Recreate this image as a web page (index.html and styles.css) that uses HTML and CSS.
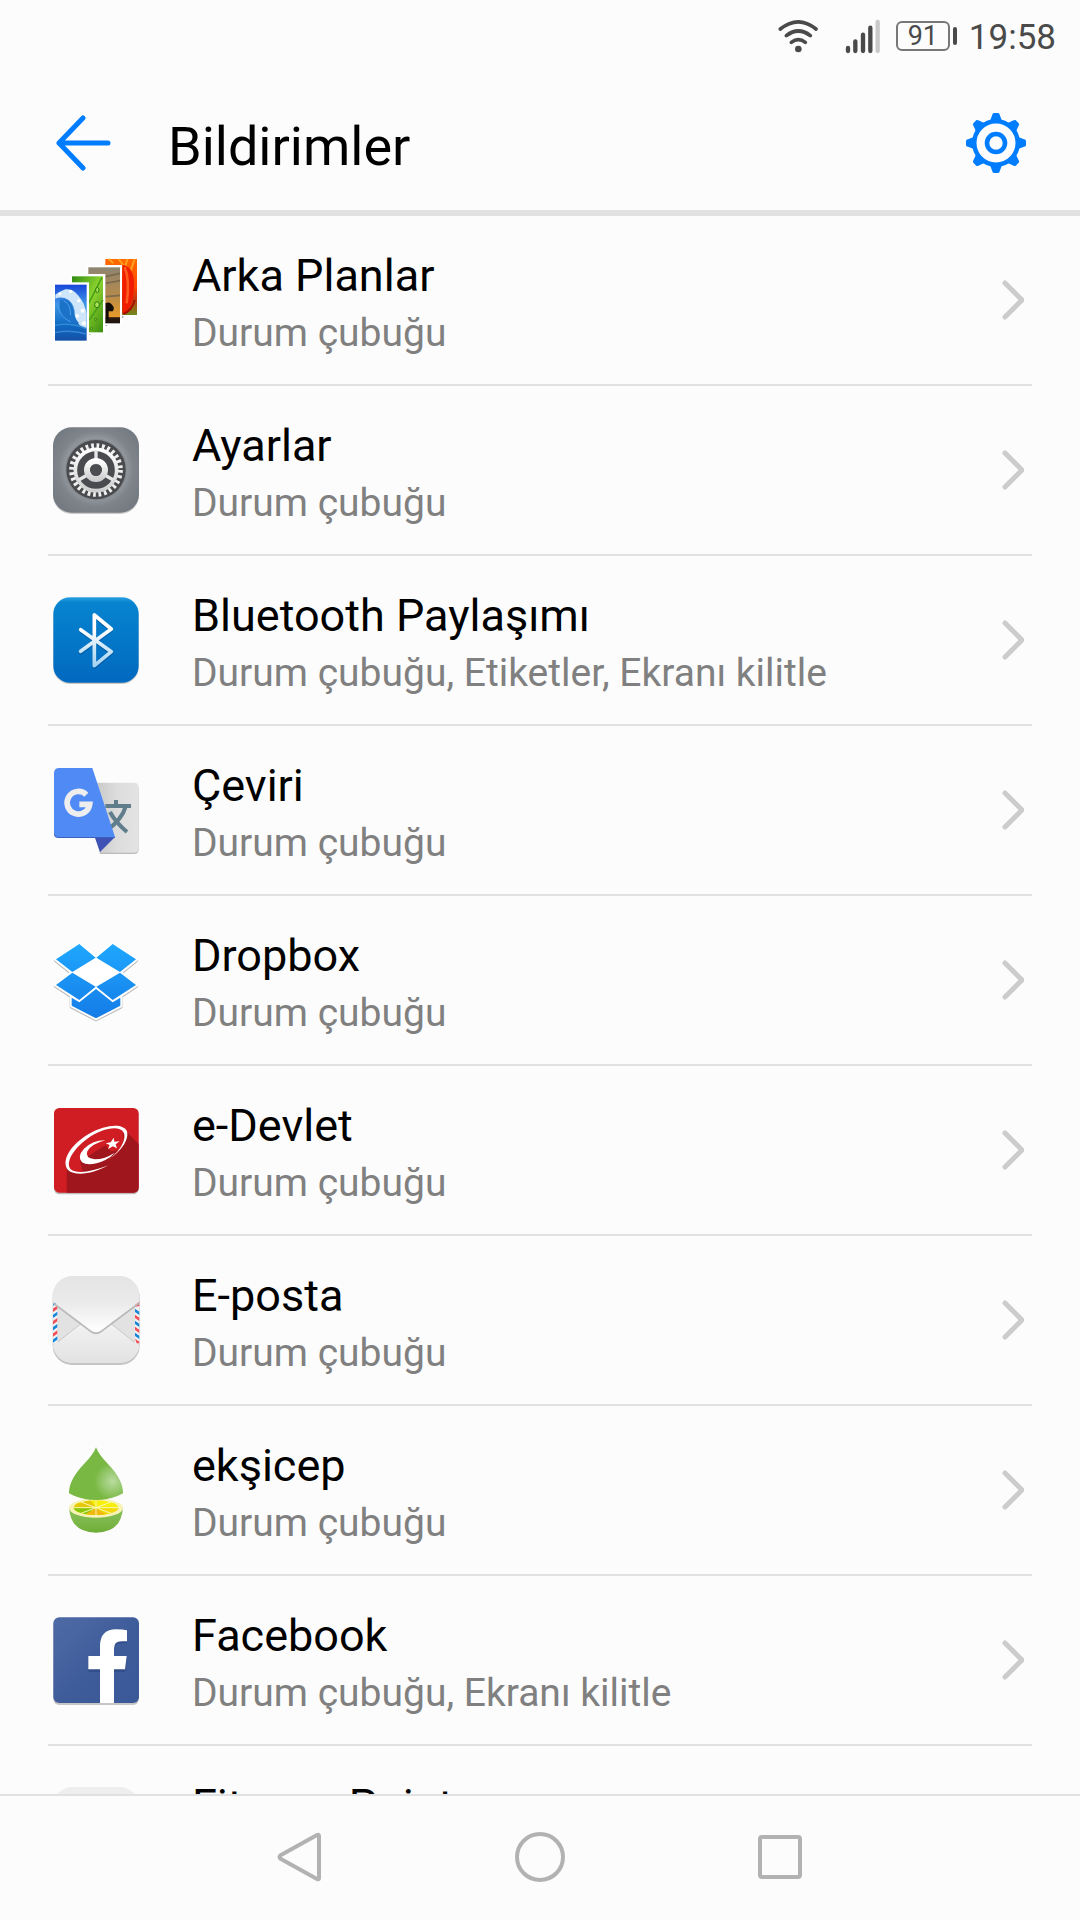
FILE: index.html
```html
<!DOCTYPE html>
<html lang="tr">
<head>
    <meta charset="UTF-8">
    <meta name="viewport" content="width=device-width, initial-scale=1.0">
    <title>Bildirimler</title>
    <link rel="stylesheet" href="styles.css">
</head>
<body>

<!-- Durum çubuğu -->
<div class="status-bar">
    <svg class="wifi" viewBox="51 51 126 108" aria-hidden="true">
        <g fill="none" stroke="#4a4a4a" stroke-width="11" stroke-linecap="round">
            <path d="M61 84Q115 41 168 84"/>
            <path d="M79 104Q115 76 151 104"/>
            <path d="M94 124Q115 108 136 124"/>
        </g>
        <circle cx="115" cy="144" r="10" fill="#4a4a4a"/>
    </svg>
    <svg class="signal" viewBox="255 51 108 108" aria-hidden="true">
        <g stroke="#4a4a4a" stroke-width="13" stroke-linecap="round">
            <path d="M264 141V150M286 121V150M309 101V150M331 80V150"/>
            <path d="M353 63V150" stroke="#c9c9c9"/>
        </g>
    </svg>
    <div class="battery">
        <span class="battery-level">91</span>
        <span class="battery-tip"></span>
    </div>
    <span class="clock">19:58</span>
</div>

<header>
    <button class="icon-button" aria-label="Geri">
        <svg class="back" viewBox="0 0 56 56">
            <path d="M28 3L4 28L28 53M4 28H53" fill="none" stroke="#007dff" stroke-width="5" stroke-linecap="round" stroke-linejoin="round"/>
        </svg>
    </button>
    <h1>Bildirimler</h1>
    <button class="icon-button" aria-label="Ayarlar">
        <svg class="gear" viewBox="-30 -30 60 60">
            <defs>
                <path id="tooth" d="M-6 -22L-3.8 -28Q-3.5 -30 -2 -30H2Q3.5 -30 3.8 -28L6 -22Z"/>
            </defs>
            <g fill="#007dff">
                <use href="#tooth"/>
                <use href="#tooth" transform="rotate(45)"/>
                <use href="#tooth" transform="rotate(90)"/>
                <use href="#tooth" transform="rotate(135)"/>
                <use href="#tooth" transform="rotate(180)"/>
                <use href="#tooth" transform="rotate(225)"/>
                <use href="#tooth" transform="rotate(270)"/>
                <use href="#tooth" transform="rotate(315)"/>
            </g>
            <circle r="21.7" fill="none" stroke="#007dff" stroke-width="4.4"/>
            <circle r="9" fill="none" stroke="#007dff" stroke-width="4.6"/>
        </svg>
    </button>
</header>

<!-- Uygulama listesi -->
<main>
    <ul class="app-list">
        <li>
            <a href="#">
                <svg class="app-icon" viewBox="24 36 288 288" aria-hidden="true">
                    <defs>
                        <linearGradient id="wave" x1="0" y1="0" x2="0" y2="1">
                            <stop offset="0" stop-color="#1746d8"/><stop offset=".35" stop-color="#3f97e8"/><stop offset=".7" stop-color="#0f6cc4"/><stop offset="1" stop-color="#1550a8"/>
                        </linearGradient>
                        <linearGradient id="leaf" x1="0" y1="0" x2="1" y2="1">
                            <stop offset="0" stop-color="#2f8a12"/><stop offset=".5" stop-color="#8ed42f"/><stop offset="1" stop-color="#3c8c10"/>
                        </linearGradient>
                        <linearGradient id="dusk" x1="0" y1="0" x2="0" y2="1">
                            <stop offset="0" stop-color="#8d8471"/><stop offset=".5" stop-color="#b58a4c"/><stop offset=".88" stop-color="#e79a2a"/><stop offset=".9" stop-color="#2a1a10"/><stop offset="1" stop-color="#1c1310"/>
                        </linearGradient>
                        <linearGradient id="tulip" x1="0" y1="0" x2="0" y2="1">
                            <stop offset="0" stop-color="#ff6a00"/><stop offset=".5" stop-color="#ff4a00"/><stop offset=".7" stop-color="#c83a10"/><stop offset="1" stop-color="#6f8a1c"/>
                        </linearGradient>
                    </defs>
                    <path d="M244 228h6v6h-6zM196 252h6v6h-6zM146 278h6v6h-6z" fill="#aaa"/>
                    <rect x="196" y="57" width="95" height="168" fill="url(#tulip)"/>
                    <path d="M206 57L220 70M236 57L250 76M262 57L256 78M284 57L272 92" stroke="#ffa01e" stroke-width="6"/>
                    <path d="M247 74Q285 80 282 140Q280 210 247 222Z" fill="#f01e00"/>
                    <path d="M254 82Q270 120 260 190" fill="none" stroke="#ff5a1e" stroke-width="8"/>
                    <path d="M284 180Q276 212 250 222" fill="none" stroke="#a80e00" stroke-width="6"/>
                    <rect x="140" y="75" width="106" height="180" fill="#fff"/>
                    <rect x="145" y="82" width="95" height="168" fill="url(#dusk)"/>
                    <path d="M196 110L240 100M196 130L240 122M196 170L240 166" stroke="#7d6b4e" stroke-width="5"/>
                    <path d="M196 190Q208 184 216 194Q226 204 218 214H206V238H196Z" fill="#120c08"/>
                    <rect x="90" y="102" width="106" height="180" fill="#fff"/>
                    <rect x="96" y="109" width="93" height="168" fill="url(#leaf)"/>
                    <path d="M146 190L186 112M148 240L189 180" stroke="#4ba01a" stroke-width="5"/>
                    <g fill="#a9e457" stroke="#2c7a0c" stroke-width="3">
                        <ellipse cx="172" cy="150" rx="5" ry="8"/><ellipse cx="171" cy="194" rx="7" ry="9"/><circle cx="167" cy="238" r="3"/><circle cx="154" cy="266" r="3"/>
                    </g>
                    <rect x="39" y="127" width="108" height="181" fill="#fff"/>
                    <rect x="45" y="134" width="95" height="168" fill="url(#wave)"/>
                    <path d="M46 164Q60 154 76 148Q98 144 114 166Q134 188 140 222V268Q108 256 104 226Q106 196 86 180Q66 168 46 176Z" fill="#cfe6fa"/>
                    <path d="M60 180Q96 172 100 212Q104 238 118 250Q76 250 66 224Q56 204 60 180Z" fill="#1c72c8"/>
                    <path d="M70 182Q92 190 92 226M52 196Q62 232 92 246" fill="none" stroke="#4a9fe4" stroke-width="3"/>
                    <path d="M45 256Q90 246 140 266M45 278Q90 268 140 282" fill="none" stroke="#3588d6" stroke-width="4"/>
                    <g fill="#fff"><circle cx="92" cy="154" r="5"/><circle cx="116" cy="182" r="5"/><circle cx="128" cy="212" r="6"/><circle cx="112" cy="228" r="5"/><circle cx="132" cy="250" r="6"/><circle cx="60" cy="162" r="4"/></g>
                </svg>
                <div class="app-text">
                    <h2>Arka Planlar</h2>
                    <p>Durum çubuğu</p>
                </div>
                <svg class="chevron" viewBox="0 0 24 40" aria-hidden="true"><path d="M5 3L22 20L5 37"/></svg>
            </a>
        </li>
        <li>
            <a href="#">
                <svg class="app-icon" viewBox="24 36 288 288" aria-hidden="true">
                    <defs>
                        <radialGradient id="plate" gradientUnits="userSpaceOnUse" cx="168" cy="176" r="150">
                            <stop offset=".55" stop-color="#9a9fa4"/><stop offset=".75" stop-color="#7e848a"/><stop offset="1" stop-color="#757b82"/>
                        </radialGradient>
                        <linearGradient id="steel" x1="0" y1="0" x2="0" y2="1">
                            <stop offset="0" stop-color="#fff"/><stop offset="1" stop-color="#cfcfcf"/>
                        </linearGradient>
                    </defs>
                    <rect x="39" y="56" width="258" height="256" rx="56" fill="#000" opacity=".2"/>
                    <rect x="39" y="52" width="258" height="256" rx="56" fill="url(#plate)"/>
                    <circle cx="168" cy="179" r="93" fill="#868b90"/>
                    <circle cx="168" cy="179" r="89" fill="#494b4e"/>
                    <circle cx="168" cy="180" r="73" fill="none" stroke="#f0f0f0" stroke-width="15" pathLength="56" stroke-dasharray="1 1"/>
                    <circle cx="168" cy="180" r="62" fill="none" stroke="url(#steel)" stroke-width="11"/>
                    <path d="M168 180V120M168 180L116 210M168 180L220 210" stroke="#e6e6e6" stroke-width="10"/>
                    <circle cx="168" cy="180" r="27" fill="none" stroke="url(#steel)" stroke-width="18"/>
                    <circle cx="168" cy="180" r="18" fill="#4b4d50"/>
                </svg>
                <div class="app-text">
                    <h2>Ayarlar</h2>
                    <p>Durum çubuğu</p>
                </div>
                <svg class="chevron" viewBox="0 0 24 40" aria-hidden="true"><path d="M5 3L22 20L5 37"/></svg>
            </a>
        </li>
        <li>
            <a href="#">
                <svg class="app-icon" viewBox="24 36 288 288" aria-hidden="true">
                    <defs>
                        <linearGradient id="bt" x1="0" y1="0" x2="0" y2="1">
                            <stop offset="0" stop-color="#2aa2e0"/><stop offset=".06" stop-color="#0684cf"/><stop offset="1" stop-color="#0169c0"/>
                        </linearGradient>
                        <linearGradient id="rune" gradientUnits="userSpaceOnUse" x1="0" y1="100" x2="0" y2="262">
                            <stop offset=".3" stop-color="#fff"/><stop offset="1" stop-color="#9fd0f0"/>
                        </linearGradient>
                    </defs>
                    <rect x="40" y="56" width="256" height="256" rx="50" fill="#000" opacity=".2"/>
                    <rect x="40" y="52" width="256" height="256" rx="50" fill="url(#bt)"/>
                    <g fill="none" stroke-width="11" stroke-linecap="round" stroke-linejoin="round">
                        <path d="M122 218L214 151L163 109V261L214 219L122 153" stroke="#00448a" opacity=".5"/>
                        <path d="M122 214L214 147L163 105V257L214 215L122 149" stroke="url(#rune)"/>
                    </g>
                </svg>
                <div class="app-text">
                    <h2>Bluetooth Paylaşımı</h2>
                    <p>Durum çubuğu, Etiketler, Ekranı kilitle</p>
                </div>
                <svg class="chevron" viewBox="0 0 24 40" aria-hidden="true"><path d="M5 3L22 20L5 37"/></svg>
            </a>
        </li>
        <li>
            <a href="#">
                <svg class="app-icon" viewBox="24 546 288 288" aria-hidden="true">
                    <defs>
                        <linearGradient id="fold" x1="0" y1="0" x2="1" y2="0">
                            <stop offset="0" stop-color="#bdbdbd"/><stop offset=".6" stop-color="#dcdcdc"/><stop offset="1" stop-color="#e4e4e4"/>
                        </linearGradient>
                    </defs>
                    <path d="M130 613H282Q296 613 296 627V808Q296 822 282 822H180Z" fill="#bbb"/>
                    <path d="M130 608H282Q296 608 296 622V804Q296 818 282 818H180Z" fill="url(#fold)"/>
                    <path d="M196 678H273M228 660V680M257 680Q246 718 200 752M210 696Q226 726 261 756" fill="none" stroke="#607d8b" stroke-width="12"/>
                    <path d="M164 771H225L180 816Z" fill="#3f51b5"/>
                    <path d="M42 600V762Q42 774 56 774H225L222 768Z" fill="#3a62b8"/>
                    <path d="M58 564H157L225 771H56Q42 771 42 757V580Q42 564 58 564Z" fill="#4f8af5"/>
                    <path d="M139 644A34 34 0 1 0 149 673H118" fill="none" stroke="#eee" stroke-width="17"/>
                </svg>
                <div class="app-text">
                    <h2>Çeviri</h2>
                    <p>Durum çubuğu</p>
                </div>
                <svg class="chevron" viewBox="0 0 24 40" aria-hidden="true"><path d="M5 3L22 20L5 37"/></svg>
            </a>
        </li>
        <li>
            <a href="#">
                <svg class="app-icon" viewBox="24 36 288 288" aria-hidden="true">
                    <defs>
                        <linearGradient id="box" gradientUnits="userSpaceOnUse" x1="0" y1="72" x2="0" y2="295">
                            <stop offset="0" stop-color="#1fa8ff"/><stop offset="1" stop-color="#147be6"/>
                        </linearGradient>
                    </defs>
                    <path d="M118 72L168 113L218 72L288 118L240 157L288 195L242 226V257L168 295L95 257V226L48 195L97 157L48 118Z" transform="translate(0 3)" fill="#bbb" stroke="#bbb" stroke-width="12" stroke-linejoin="round"/>
                    <path d="M118 72L168 113L218 72L288 118L240 157L288 195L242 226V257L168 295L95 257V226L48 195L97 157L48 118Z" fill="#fff" stroke="#fff" stroke-width="11" stroke-linejoin="round"/>
                    <g fill="url(#box)">
                        <path d="M118 72L167 113L97 156L48 118Z"/>
                        <path d="M218 72L288 118L240 156L169 113Z"/>
                        <path d="M97 158L167 200L118 240L48 195Z"/>
                        <path d="M240 158L288 195L218 240L169 200Z"/>
                        <path d="M95 233L118 247L168 207L218 247L241 233V257L168 295L95 257Z"/>
                    </g>
                </svg>
                <div class="app-text">
                    <h2>Dropbox</h2>
                    <p>Durum çubuğu</p>
                </div>
                <svg class="chevron" viewBox="0 0 24 40" aria-hidden="true"><path d="M5 3L22 20L5 37"/></svg>
            </a>
        </li>
        <li>
            <a href="#">
                <svg class="app-icon" viewBox="24 546 288 288" aria-hidden="true">
                    <rect x="42" y="569" width="254" height="254" rx="16" fill="#bbb"/>
                    <rect x="42" y="564" width="254" height="254" rx="16" fill="#d01c23"/>
                    <path d="M258 634L296 672V802Q296 818 280 818H80V738L120 700L240 650Z" fill="#9f161c"/>
                    <path d="M82 738Q82 700 130 660Q190 616 240 630Q262 650 240 690Q200 740 120 756Q90 758 82 738Z" fill="#d01c23"/>
                    <path d="M120 724L128 755Q180 746 214 716L240 690L212 694L196 676Z" fill="#9f161c"/>
                    <path fill="#fff" fill-rule="evenodd" d="M204 736C160 762 106 770 84 750C62 722 92 674 146 642C200 612 250 610 261 634C268 664 236 700 204 719C240 696 262 656 250 636C236 614 184 626 142 656C98 688 76 728 92 748C112 764 160 754 204 736Z"/>
                    <path d="M196 661Q160 660 132 686Q110 710 126 727Q148 742 196 720Q215 710 224 698Q194 718 164 718Q134 714 142 694Q154 672 196 661Z" fill="#fff"/>
                    <path d="M221 653L223 665L239 664L227 673L231 685L218 679L204 688L209 675L197 670L212 667Z" fill="#fff"/>
                </svg>
                <div class="app-text">
                    <h2>e-Devlet</h2>
                    <p>Durum çubuğu</p>
                </div>
                <svg class="chevron" viewBox="0 0 24 40" aria-hidden="true"><path d="M5 3L22 20L5 37"/></svg>
            </a>
        </li>
        <li>
            <a href="#">
                <svg class="app-icon" viewBox="24 36 288 288" aria-hidden="true">
                    <defs>
                        <linearGradient id="flap" x1="0" y1="0" x2="0" y2="1">
                            <stop offset="0" stop-color="#e4e4e4"/><stop offset=".5" stop-color="#ebebeb"/><stop offset="1" stop-color="#fff"/>
                        </linearGradient>
                        <linearGradient id="paper" gradientUnits="userSpaceOnUse" x1="0" y1="180" x2="0" y2="308">
                            <stop offset="0" stop-color="#f4f4f4"/><stop offset="1" stop-color="#e2e2e2"/>
                        </linearGradient>
                        <clipPath id="envelope"><rect x="39" y="49" width="259" height="260" rx="58"/></clipPath>
                    </defs>
                    <rect x="38" y="54" width="261" height="261" rx="58" fill="#c4c4c4"/>
                    <g clip-path="url(#envelope)">
                        <rect x="38" y="48" width="261" height="261" fill="#e2e2e2"/>
                        <path d="M38 258L124 190H212L299 258V309H38Z" fill="url(#paper)"/>
                        <path d="M52 247L124 190M212 190L284 247" stroke="#c6c6c6" stroke-width="3"/>
                        <path d="M38 126H52V250H38ZM285 126H299V250H285Z" fill="#f2f2f2"/>
                        <path d="M38 131L50 126V132L38 138ZM38 165L52 155V165L38 175ZM38 202L52 192V202L38 212ZM38 239L52 229V239L38 249ZM285 146L299 156V166L285 156ZM285 182L299 192V202L285 192ZM285 218L299 228V238L285 228Z" fill="#1787dc"/>
                        <path d="M38 146L52 137V147L38 157ZM38 184L52 174V184L38 194ZM38 221L52 211V221L38 231ZM285 134L299 124V138L285 140ZM285 164L299 174V184L285 174ZM285 200L299 210V220L285 210ZM285 236L299 246V250H290Z" fill="#f04f58"/>
                        <path d="M38 128L152 214Q168 226 184 214L299 128" fill="none" stroke="#b9b9b9" stroke-width="5"/>
                        <path d="M38 48H299V124L182 211Q168 221 154 211L38 124Z" fill="url(#flap)"/>
                    </g>
                </svg>
                <div class="app-text">
                    <h2>E-posta</h2>
                    <p>Durum çubuğu</p>
                </div>
                <svg class="chevron" viewBox="0 0 24 40" aria-hidden="true"><path d="M5 3L22 20L5 37"/></svg>
            </a>
        </li>
        <li>
            <a href="#">
                <svg class="app-icon" viewBox="24 546 288 288" aria-hidden="true">
                    <defs>
                        <radialGradient id="lime" gradientUnits="userSpaceOnUse" cx="218" cy="664" r="56">
                            <stop offset="0" stop-color="#b9dca0"/><stop offset="1" stop-color="#79b843"/>
                        </radialGradient>
                        <linearGradient id="rind" x1="0" y1="0" x2="0" y2="1">
                            <stop offset="0" stop-color="#8cc25e"/><stop offset="1" stop-color="#6fae3a"/>
                        </linearGradient>
                        <clipPath id="pulp"><ellipse cx="168" cy="743" rx="67" ry="22"/></clipPath>
                    </defs>
                    <path d="M168 562Q176 584 204 612Q250 660 249 700Q216 720 168 720Q120 720 87 700Q86 660 132 612Q160 584 168 562Z" fill="url(#lime)"/>
                    <path d="M87 743Q92 817 168 818Q244 817 249 743Z" fill="url(#rind)"/>
                    <ellipse cx="168" cy="744" rx="81" ry="29" fill="#f6f3b4"/>
                    <g clip-path="url(#pulp)">
                        <rect x="98" y="718" width="140" height="50" fill="#f7ee0a"/>
                        <path d="M168 743L98 743V718H150Z" fill="#e6c80a"/>
                        <path d="M168 743L98 743V760L130 770Z" fill="#8cc608"/>
                        <path d="M168 743L125 770H210Z" fill="#efb90d"/>
                        <path d="M168 743L210 770L238 745Z" fill="#f4d80a"/>
                        <path d="M98 743H238M168 716V770M112 722L224 764M112 764L224 722" stroke="#f9f7b0" stroke-width="3"/>
                    </g>
                    <path d="M130 716Q168 724 206 716Q168 706 130 716Z" fill="#79b843"/>
                </svg>
                <div class="app-text">
                    <h2>ekşicep</h2>
                    <p>Durum çubuğu</p>
                </div>
                <svg class="chevron" viewBox="0 0 24 40" aria-hidden="true"><path d="M5 3L22 20L5 37"/></svg>
            </a>
        </li>
        <li>
            <a href="#">
                <svg class="app-icon" viewBox="24 36 288 288" aria-hidden="true">
                    <defs>
                        <linearGradient id="fb" x1="0" y1="0" x2="1" y2="1">
                            <stop offset="0" stop-color="#4f6ba6"/><stop offset=".6" stop-color="#3d5a99"/><stop offset="1" stop-color="#3b5998"/>
                        </linearGradient>
                    </defs>
                    <rect x="40" y="58" width="257" height="257" rx="18" fill="#c6c6c6"/>
                    <rect x="40" y="52" width="257" height="257" rx="18" fill="url(#fb)"/>
                    <path d="M145 176H180V142Q182 96 228 96H261V130H244Q222 130 222 152V176H260L255 216H222V309H180V216H145Z" fill="#2c4680" opacity=".6"/>
                    <path d="M145 168H180V136Q182 88 228 88Q248 88 261 91V124H244Q222 124 222 146V168H260L255 208H222V309H180V208H145Z" fill="#fff"/>
                </svg>
                <div class="app-text">
                    <h2>Facebook</h2>
                    <p>Durum çubuğu, Ekranı kilitle</p>
                </div>
                <svg class="chevron" viewBox="0 0 24 40" aria-hidden="true"><path d="M5 3L22 20L5 37"/></svg>
            </a>
        </li>
        <li>
            <a href="#">
                <svg class="app-icon" viewBox="24 36 288 288" aria-hidden="true">
                    <rect x="40" y="51" width="256" height="256" rx="56" fill="#eee"/>
                </svg>
                <div class="app-text">
                    <h2>Fitness Point</h2>
                </div>
                <svg class="chevron" viewBox="0 0 24 40" aria-hidden="true"><path d="M5 3L22 20L5 37"/></svg>
            </a>
        </li>
    </ul>
</main>

<!-- Gezinme tuşları -->
<nav>
    <button aria-label="Geri">
        <svg viewBox="0 0 52 52"><path d="M43 4Q45 3 45 5V47Q45 49 43 48L7 28Q4 26 7 24Z"/></svg>
    </button>
    <button aria-label="Ana ekran">
        <svg viewBox="0 0 52 52"><circle cx="26" cy="26" r="23"/></svg>
    </button>
    <button aria-label="Son uygulamalar">
        <svg viewBox="0 0 52 52"><rect x="6" y="6" width="40" height="40" rx="2"/></svg>
    </button>
</nav>

</body>
</html>
```
FILE: styles.css
```css
/* Genel stiller */
* {
    box-sizing: border-box;
}
body {
    font-family: Roboto, "Noto Sans", sans-serif;
    margin: 0;
    height: 100vh;
    display: flex;
    flex-direction: column;
    background-color: #fcfcfc;
    color: #000;
}
h1, h2, p, ul {
    margin: 0;
    padding: 0;
    font-weight: 400;
}
svg {
    display: block;
    flex-shrink: 0;
}
button {
    padding: 0;
    border: none;
    background: none;
    cursor: pointer;
}

/* Durum çubuğu */
.status-bar {
    display: flex;
    align-items: center;
    justify-content: flex-end;
    height: 76px;
    padding: 0 24px 4px;
    color: #4a4a4a;
}
.wifi {
    width: 42px;
    height: 36px;
    margin-right: 26px;
}
.signal {
    width: 36px;
    height: 36px;
    margin-right: 15px;
}
.battery {
    display: flex;
    align-items: center;
    gap: 3px;
    margin-right: 12px;
}
.battery-level {
    width: 54px;
    border: 2px solid #777;
    border-radius: 6px;
    font-size: 27px;
    line-height: 26px;
    text-align: center;
}
.battery-tip {
    width: 4px;
    height: 18px;
    border-radius: 2px;
    background-color: #4a4a4a;
}
.clock {
    padding-top: 3px;
    font-size: 35px;
    line-height: 40px;
}

/* Başlık */
header {
    display: flex;
    align-items: center;
    height: 140px;
    padding: 0 54px 0 55px;
    border-bottom: 6px solid #e1e1e1;
}
header h1 {
    flex: 1;
    padding: 8px 0 0 57px;
    font-size: 54px;
    line-height: 64px;
}
.back {
    width: 56px;
    height: 56px;
}
.gear {
    width: 60px;
    height: 60px;
}

/* Uygulama listesi */
main {
    flex: 1;
    min-height: 0;
    overflow: hidden;
}
.app-list {
    list-style: none;
    margin: 0 48px;
}
.app-list li {
    border-bottom: 2px solid #e1e1e1;
}
.app-list a {
    display: flex;
    align-items: center;
    min-height: 168px;
    padding-right: 8px;
    color: inherit;
    text-decoration: none;
}
.app-icon {
    width: 96px;
    height: 96px;
}
.app-text {
    flex: 1;
    min-height: 122px;
    padding: 8px 0 0 48px;
}
.app-text h2 {
    font-size: 45px;
    line-height: 58px;
}
.app-text p {
    font-size: 39px;
    line-height: 56px;
    color: #808080;
}
.chevron {
    width: 24px;
    height: 40px;
    fill: none;
    stroke: #ccc;
    stroke-width: 5;
    stroke-linecap: round;
    stroke-linejoin: round;
}

/* Gezinme tuşları */
nav {
    display: flex;
    justify-content: center;
    gap: 188px;
    height: 126px;
    padding-bottom: 2px;
    border-top: 2px solid #e1e1e1;
}
nav svg {
    width: 52px;
    height: 52px;
    fill: none;
    stroke: #b2b2b2;
    stroke-width: 4;
    stroke-linejoin: round;
}
```
